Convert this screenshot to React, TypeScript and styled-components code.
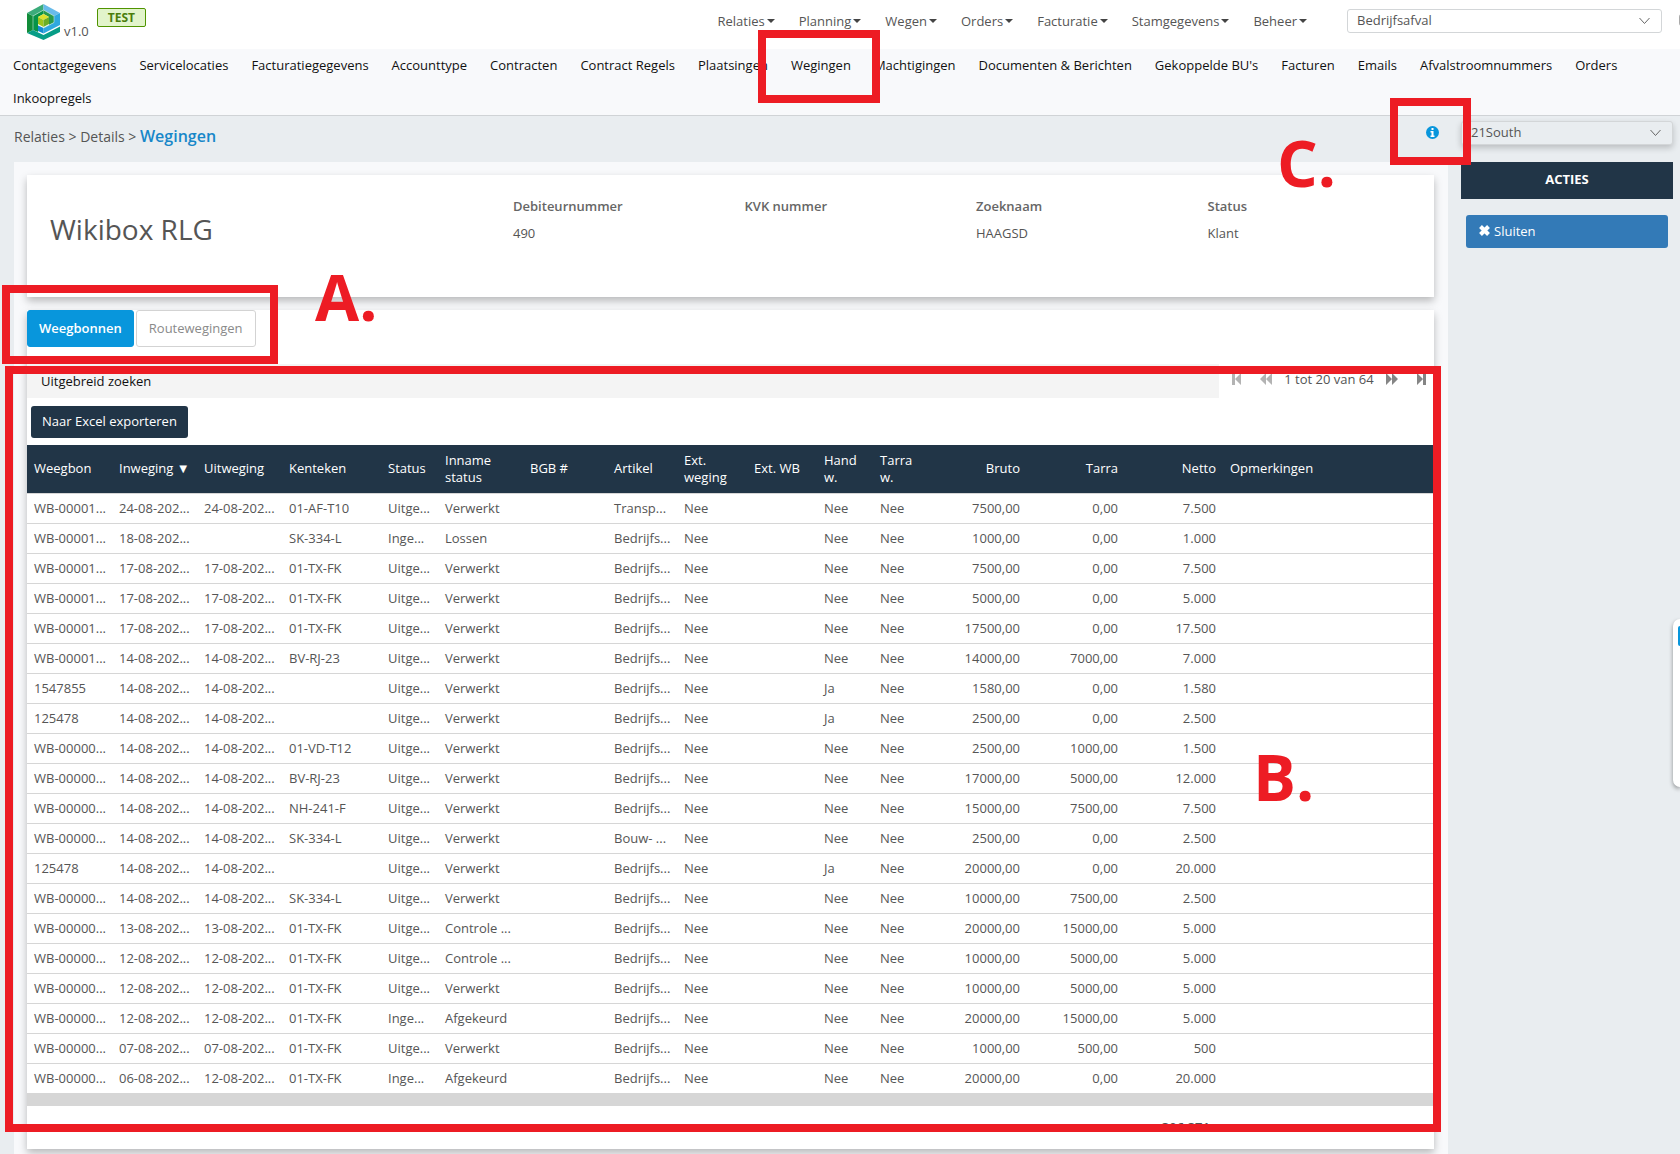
import React from "react";
import styled, { createGlobalStyle, css } from "styled-components";

const GlobalStyle = createGlobalStyle`
  *, *::before, *::after { box-sizing: border-box; }
  body {
    margin: 0;
    background: #e9edf0;
    color: #555;
    font-family: "Open Sans", "Noto Sans", sans-serif;
    font-size: 13px;
    line-height: 18px;
    overflow-x: hidden;
  }
  button, select { font: inherit; }
  a { color: inherit; text-decoration: none; }
`;

const RED = "#ed1c24";
const NAVY = "#213547";

const Page = styled.div`
  position: relative;
  display: flex;
  flex-direction: column;
  min-height: 100vh;
  overflow: hidden;
`;

const TopBar = styled.header`
  display: flex;
  align-items: flex-start;
  height: 49px;
  padding-left: 27px;
  background: #fff;
`;

const Logo = styled.svg`
  width: 33px;
  height: 36px;
  margin-top: 4px;
`;

const Version = styled.span`
  margin: 22px 8px 0 4px;
`;

const EnvBadge = styled.span`
  margin-top: 8px;
  padding: 0 10px;
  border: 1px solid #4f9400;
  border-radius: 2px;
  background: #e2f4cb;
  color: #4a7d0c;
  font-size: 12px;
  font-weight: 700;
  line-height: 17px;
`;

const MainNav = styled.nav`
  display: flex;
  gap: 24px;
  margin-left: auto;
  padding-top: 12px;
`;

const NavLink = styled.a`
  display: flex;
  align-items: center;
  gap: 2px;
  &::after {
    content: "";
    border: 4px solid transparent;
    border-top-color: #444;
    border-bottom: 0;
  }
`;

const SelectBox = styled.div<{ $raised?: boolean }>`
  position: relative;
  height: 24px;
  border: 1px solid #d3d6d8;
  border-radius: 3px;
  background: #fff;
  ${(p) =>
    p.$raised
      ? css`
          background: #e9edf0;
          box-shadow: 0 3px 6px rgba(0, 0, 0, 0.2);
        `
      : css`
          width: 315px;
          margin: 9px 17px 0 40px;
        `}
  select {
    display: block;
    width: 100%;
    height: 20px;
    padding: 0 9px;
    border: 0;
    background: transparent;
    color: #555;
    appearance: none;
  }
  svg {
    position: absolute;
    top: 7px;
    right: 11px;
    width: 11px;
    height: 8px;
    pointer-events: none;
  }
`;

const UserDot = styled.button`
  flex: none;
  width: 16px;
  height: 12px;
  margin: 14px -15px 0 0;
  padding: 0;
  border: 0;
  border-radius: 3px;
  background: #a9a9a9;
`;

const SubNav = styled.nav`
  display: flex;
  flex-wrap: wrap;
  column-gap: 23px;
  padding: 0 13px;
  border-bottom: 1px solid #d0d3d6;
  background: #f8f9fb;
  color: #111;
  line-height: 33px;
`;

const Body = styled.div`
  display: flex;
  flex: 1;
`;

const Main = styled.main`
  display: flex;
  flex: 1;
  flex-direction: column;
  min-width: 0;
  padding-left: 14px;
`;

const Crumbs = styled.div`
  display: flex;
  align-items: center;
  justify-content: space-between;
  height: 46px;
  padding-right: 9px;
  font-size: 14px;
`;

const CrumbPath = styled.div`
  padding-bottom: 6px;
  strong {
    color: #1787c9;
    font-size: 16px;
    font-weight: 600;
  }
`;

const InfoButton = styled.button`
  display: flex;
  padding: 0 0 13px;
  border: 0;
  background: none;
  svg {
    width: 13px;
    height: 13px;
  }
`;

const Content = styled.div`
  flex: 1;
  padding: 13px 14px 4px 13px;
  background: #f8f9fb;
`;

const Card = styled.section`
  margin-bottom: 13px;
  background: #fff;
  box-shadow: 0 4px 8px rgba(0, 0, 0, 0.26);
  &:last-child {
    margin-bottom: 0;
  }
`;

const Summary = styled(Card)`
  display: grid;
  grid-template-columns: 2fr 1fr 1fr 1fr 1fr;
  height: 122px;
  padding: 22px 9px 0;
`;

const Title = styled.h1`
  margin: 15px 0 0 14px;
  font-size: 28px;
  font-weight: 400;
  line-height: 34px;
`;

const Field = styled.dl`
  margin: 0 0 0 14px;
  dt {
    color: #666;
    font-weight: 600;
  }
  dd {
    margin: 9px 0 0;
  }
`;

const Tabs = styled.div`
  display: flex;
  gap: 2px;
  height: 54px;
`;

const Tab = styled.button<{ $active?: boolean }>`
  height: 37px;
  padding: 0 ${(p) => (p.$active ? 11 : 12)}px 2px;
  border: 1px solid ${(p) => (p.$active ? "#0896dc" : "#d3d3d3")};
  border-radius: 3px;
  background: ${(p) => (p.$active ? "#0896dc" : "#fff")};
  color: ${(p) => (p.$active ? "#fff" : "#8a8a8a")};
  font-weight: ${(p) => (p.$active ? 600 : 400)};
`;

const SearchRow = styled.div`
  display: flex;
  height: 34px;
`;

const SearchToggle = styled.button`
  flex: 1;
  padding: 0 14px;
  border: 0;
  background: #f4f4f4;
  color: #111;
  text-align: left;
`;

const Pager = styled.div`
  display: flex;
  align-items: center;
  justify-content: space-between;
  width: 215px;
  padding: 0 8px 4px 13px;
`;

const PagerCenter = styled.div`
  display: flex;
  align-items: center;
  gap: 12px;
`;

const PageButton = styled.button<{ $off?: boolean }>`
  display: flex;
  padding: 0;
  border: 0;
  background: none;
  color: ${(p) => (p.$off ? "#b3b3b3" : "#858585")};
  svg {
    height: 12px;
    fill: currentColor;
  }
`;

const Toolbar = styled.div`
  height: 47px;
  padding: 8px 4px;
`;

const ExportButton = styled.button`
  height: 32px;
  padding: 0 11px 2px;
  border: 0;
  border-radius: 3px;
  background: ${NAVY};
  color: #fff;
`;

const Grid = styled.table`
  width: 100%;
  border-collapse: separate;
  border-spacing: 0;
  table-layout: fixed;
`;

const Col = styled.col<{ $w?: number }>`
  width: ${(p) => (p.$w ? `${p.$w}px` : "auto")};
`;

const HeadCell = styled.th<{ $right?: boolean }>`
  height: 48px;
  padding: 0 7px 1px;
  background: ${NAVY};
  color: #fff;
  font-weight: 400;
  line-height: 17px;
  text-align: ${(p) => (p.$right ? "right" : "left")};
`;

const Cell = styled.td<{ $right?: boolean }>`
  height: 30px;
  padding: 0 0 1px 7px;
  padding-right: ${(p) => (p.$right ? 7 : 0)}px;
  overflow: hidden;
  border-top: 1px solid #d6d6d6;
  text-align: ${(p) => (p.$right ? "right" : "left")};
  white-space: nowrap;
`;

const FootBar = styled.td`
  height: 13px;
  padding: 0;
  background: #d6d6d6;
`;

const FootCell = styled.td`
  height: 43px;
  padding: 0 13px 2px 0;
  font-weight: 600;
  text-align: right;
`;

const Aside = styled.aside`
  width: 212px;
  margin: 5px 7px 0 13px;
`;

const AsideTitle = styled.h2`
  margin: 17px 0 16px;
  padding-bottom: 2px;
  background: ${NAVY};
  color: #fff;
  font-size: 13px;
  font-weight: 700;
  line-height: 35px;
  text-align: center;
`;

const CloseButton = styled.button`
  display: flex;
  align-items: center;
  gap: 3px;
  width: calc(100% - 10px);
  height: 33px;
  margin: 0 5px;
  padding: 0 12px 2px;
  border: 0;
  border-radius: 3px;
  background: #337ab7;
  color: #fff;
  svg {
    width: 13px;
    height: 13px;
  }
`;

const SideTab = styled.div`
  position: absolute;
  top: 619px;
  right: 0;
  width: 7px;
  height: 168px;
  padding: 7px 0 0 5px;
  border-radius: 7px 0 0 7px;
  background: #fff;
  box-shadow: 0 2px 4px rgba(0, 0, 0, 0.4);
  &::after {
    content: "";
    display: block;
    height: 20px;
    border-radius: 2px 0 0 2px;
    background: #0896dc;
  }
`;

const Marker = styled.div<{ $x: number; $y: number; $w: number; $h: number }>`
  position: absolute;
  left: ${(p) => p.$x}px;
  top: ${(p) => p.$y}px;
  width: ${(p) => p.$w}px;
  height: ${(p) => p.$h}px;
  border: 8px solid ${RED};
  pointer-events: none;
`;

const MarkerLabel = styled.span<{ $x: number; $y: number }>`
  position: absolute;
  left: ${(p) => p.$x}px;
  top: ${(p) => p.$y}px;
  color: ${RED};
  font-size: 64px;
  font-weight: 700;
  line-height: 64px;
  pointer-events: none;
`;

const mainLinks = ["Relaties", "Planning", "Wegen", "Orders", "Facturatie", "Stamgegevens", "Beheer"];

const subLinks = [
  "Contactgegevens", "Servicelocaties", "Facturatiegegevens", "Accounttype", "Contracten",
  "Contract Regels", "Plaatsingen", "Wegingen", "Machtigingen", "Documenten & Berichten",
  "Gekoppelde BU's", "Facturen", "Emails", "Afvalstroomnummers", "Orders", "Inkoopregels",
];

const fields = [
  ["Debiteurnummer", "490"],
  ["KVK nummer", ""],
  ["Zoeknaam", "HAAGSD"],
  ["Status", "Klant"],
];

const columns: { title: string; w?: number; right?: boolean }[] = [
  { title: "Weegbon", w: 85 },
  { title: "Inweging ▼", w: 85 },
  { title: "Uitweging", w: 85 },
  { title: "Kenteken", w: 99 },
  { title: "Status", w: 57 },
  { title: "Inname status", w: 85 },
  { title: "BGB #", w: 84 },
  { title: "Artikel", w: 70 },
  { title: "Ext. weging", w: 70 },
  { title: "Ext. WB", w: 70 },
  { title: "Hand w.", w: 56 },
  { title: "Tarra w.", w: 56 },
  { title: "Bruto", w: 98, right: true },
  { title: "Tarra", w: 98, right: true },
  { title: "Netto", w: 98, right: true },
  { title: "Opmerkingen" },
];

// bon | in | uit | kenteken | status | inname | artikel | hand | bruto | tarra | netto
const records = `WB-00001...|24-08-202...|24-08-202...|01-AF-T10|Uitge...|Verwerkt|Transp...|Nee|7500,00|0,00|7.500
WB-00001...|18-08-202...||SK-334-L|Inge...|Lossen|Bedrijfs...|Nee|1000,00|0,00|1.000
WB-00001...|17-08-202...|17-08-202...|01-TX-FK|Uitge...|Verwerkt|Bedrijfs...|Nee|7500,00|0,00|7.500
WB-00001...|17-08-202...|17-08-202...|01-TX-FK|Uitge...|Verwerkt|Bedrijfs...|Nee|5000,00|0,00|5.000
WB-00001...|17-08-202...|17-08-202...|01-TX-FK|Uitge...|Verwerkt|Bedrijfs...|Nee|17500,00|0,00|17.500
WB-00001...|14-08-202...|14-08-202...|BV-RJ-23|Uitge...|Verwerkt|Bedrijfs...|Nee|14000,00|7000,00|7.000
1547855|14-08-202...|14-08-202...||Uitge...|Verwerkt|Bedrijfs...|Ja|1580,00|0,00|1.580
125478|14-08-202...|14-08-202...||Uitge...|Verwerkt|Bedrijfs...|Ja|2500,00|0,00|2.500
WB-00000...|14-08-202...|14-08-202...|01-VD-T12|Uitge...|Verwerkt|Bedrijfs...|Nee|2500,00|1000,00|1.500
WB-00000...|14-08-202...|14-08-202...|BV-RJ-23|Uitge...|Verwerkt|Bedrijfs...|Nee|17000,00|5000,00|12.000
WB-00000...|14-08-202...|14-08-202...|NH-241-F|Uitge...|Verwerkt|Bedrijfs...|Nee|15000,00|7500,00|7.500
WB-00000...|14-08-202...|14-08-202...|SK-334-L|Uitge...|Verwerkt|Bouw- ...|Nee|2500,00|0,00|2.500
125478|14-08-202...|14-08-202...||Uitge...|Verwerkt|Bedrijfs...|Ja|20000,00|0,00|20.000
WB-00000...|14-08-202...|14-08-202...|SK-334-L|Uitge...|Verwerkt|Bedrijfs...|Nee|10000,00|7500,00|2.500
WB-00000...|13-08-202...|13-08-202...|01-TX-FK|Uitge...|Controle ...|Bedrijfs...|Nee|20000,00|15000,00|5.000
WB-00000...|12-08-202...|12-08-202...|01-TX-FK|Uitge...|Controle ...|Bedrijfs...|Nee|10000,00|5000,00|5.000
WB-00000...|12-08-202...|12-08-202...|01-TX-FK|Uitge...|Verwerkt|Bedrijfs...|Nee|10000,00|5000,00|5.000
WB-00000...|12-08-202...|12-08-202...|01-TX-FK|Inge...|Afgekeurd|Bedrijfs...|Nee|20000,00|15000,00|5.000
WB-00000...|07-08-202...|07-08-202...|01-TX-FK|Uitge...|Verwerkt|Bedrijfs...|Nee|1000,00|500,00|500
WB-00000...|06-08-202...|12-08-202...|01-TX-FK|Inge...|Afgekeurd|Bedrijfs...|Nee|20000,00|0,00|20.000`
  .split("\n")
  .map((line) => {
    const [bon, inw, uit, plate, status, inname, artikel, hand, bruto, tarra, netto] = line.split("|");
    return [bon, inw, uit, plate, status, inname, "", artikel, "Nee", "", hand, "Nee", bruto, tarra, netto, ""];
  });

const Chevron = () => (
  <svg viewBox="0 0 11 8" fill="none" stroke="#666" aria-hidden="true">
    <path d="M0.5 1L5.5 6.5L10.5 1" />
  </svg>
);

const BrandLogo = () => (
  <Logo viewBox="0 0 33 36" role="img" aria-label="Logo">
    <path d="M0 9L6 12V26L0 29Z" fill="#128c39" />
    <path d="M0 9L16.5 0V6L6 12Z" fill="#3bab7a" />
    <path d="M16.5 0L33 9L27 12L16.5 6Z" fill="#68bbea" />
    <path d="M6 12L16.5 6V10L11 13V28L6 26Z" fill="#079348" />
    <path d="M16.5 6L27 12V18.5L22 21V13L16.5 10Z" fill="#2a9a4a" />
    <path d="M33 9V21L16.5 29.5V24L27 18.5V12Z" fill="#2fa8df" />
    <path d="M11 21.5L16.5 24V29.5L11 27Z" fill="#138bd2" />
    <path d="M0 29L6 26L16.5 31L33 22.5V28L16.5 36Z" fill="#079d87" />
    <path d="M11 13L16.5 10L22 13L16.5 16Z" fill="#dce22c" />
    <path d="M11 13L16.5 16V23L11 20Z" fill="#9fc51c" />
    <path d="M22 13L16.5 16V23L22 20Z" fill="#6cae25" />
    <path d="M6 26V12L16.5 6L27 12V18.5L16.5 24" fill="none" stroke="#c5e8da" strokeWidth="0.6" />
  </Logo>
);

const StepIcon = ({ flip }: { flip?: boolean }) => (
  <svg width="9" viewBox="0 0 9 12" aria-hidden="true">
    <path d={flip ? "M0 0L6 6L0 12ZM6 0H9V12H6Z" : "M9 0L3 6L9 12ZM0 0H3V12H0Z"} />
  </svg>
);

const SkipIcon = ({ flip }: { flip?: boolean }) => (
  <svg width="12" viewBox="0 0 12 12" aria-hidden="true">
    <path d={flip ? "M0 0L6 6L0 12ZM6 0L12 6L6 12Z" : "M6 0L0 6L6 12ZM12 0L6 6L12 12Z"} />
  </svg>
);

export default function App() {
  return (
    <Page>
      <GlobalStyle />
      <TopBar>
        <BrandLogo />
        <Version>v1.0</Version>
        <EnvBadge>TEST</EnvBadge>
        <MainNav>
          {mainLinks.map((name) => (
            <NavLink href="#" key={name}>{name}</NavLink>
          ))}
        </MainNav>
        <SelectBox>
          <select aria-label="Afvalsoort">
            <option>Bedrijfsafval</option>
          </select>
          <Chevron />
        </SelectBox>
        <UserDot aria-label="Gebruiker" />
      </TopBar>
      <SubNav>
        {subLinks.map((name) => (
          <a href="#" key={name}>{name}</a>
        ))}
      </SubNav>
      <Body>
        <Main>
          <Crumbs>
            <CrumbPath>
              <a href="#">Relaties</a> &gt; <a href="#">Details</a> &gt; <strong>Wegingen</strong>
            </CrumbPath>
            <InfoButton aria-label="Informatie">
              <svg viewBox="0 0 13 13" aria-hidden="true">
                <circle cx="6.5" cy="6.5" r="6.5" fill="#0896dc" />
                <path d="M5.500 2H7.500V4H5.500ZM4.500 5H7.500V9.500H8.500V11H4.500V9.500H5.500V6.500H4.500Z" fill="#fff" />
              </svg>
            </InfoButton>
          </Crumbs>
          <Content>
            <Summary>
              <Title>Wikibox RLG</Title>
              {fields.map(([label, value]) => (
                <Field key={label}>
                  <dt>{label}</dt>
                  <dd>{value}</dd>
                </Field>
              ))}
            </Summary>
            <Card>
              <Tabs>
                <Tab $active>Weegbonnen</Tab>
                <Tab>Routewegingen</Tab>
              </Tabs>
              <SearchRow>
                <SearchToggle>Uitgebreid zoeken</SearchToggle>
                <Pager>
                  <PageButton $off aria-label="Eerste pagina"><StepIcon /></PageButton>
                  <PagerCenter>
                    <PageButton $off aria-label="Vorige pagina"><SkipIcon /></PageButton>
                    <span>1 tot 20 van 64</span>
                    <PageButton aria-label="Volgende pagina"><SkipIcon flip /></PageButton>
                  </PagerCenter>
                  <PageButton aria-label="Laatste pagina"><StepIcon flip /></PageButton>
                </Pager>
              </SearchRow>
              <Toolbar>
                <ExportButton>Naar Excel exporteren</ExportButton>
              </Toolbar>
              <Grid>
                <colgroup>
                  {columns.map((c, i) => (
                    <Col key={i} $w={c.w} />
                  ))}
                </colgroup>
                <thead>
                  <tr>
                    {columns.map((c, i) => (
                      <HeadCell key={i} scope="col" $right={c.right}>{c.title}</HeadCell>
                    ))}
                  </tr>
                </thead>
                <tbody>
                  {records.map((row, r) => (
                    <tr key={r}>
                      {row.map((value, i) => (
                        <Cell key={i} $right={columns[i].right}>{value}</Cell>
                      ))}
                    </tr>
                  ))}
                </tbody>
                <tfoot>
                  <tr><FootBar colSpan={16} /></tr>
                  <tr>
                    <FootCell colSpan={15}>306.371</FootCell>
                    <td />
                  </tr>
                </tfoot>
              </Grid>
            </Card>
          </Content>
        </Main>
        <Aside>
          <SelectBox $raised>
            <select aria-label="Vestiging">
              <option>21South</option>
            </select>
            <Chevron />
          </SelectBox>
          <AsideTitle>ACTIES</AsideTitle>
          <CloseButton>
            <svg viewBox="0 0 13 13" aria-hidden="true">
              <path d="M2.500 2.500L10.500 10.500M10.500 2.500L2.500 10.500" stroke="#fff" strokeWidth="4" />
            </svg>
            Sluiten
          </CloseButton>
        </Aside>
      </Body>
      <SideTab />
      <Marker $x={758} $y={30} $w={122} $h={73} />
      <Marker $x={1390} $y={98} $w={81} $h={67} />
      <Marker $x={2} $y={285} $w={276} $h={79} />
      <Marker $x={5} $y={366} $w={1436} $h={766} />
      <MarkerLabel $x={315} $y={265}>A.</MarkerLabel>
      <MarkerLabel $x={1253} $y={745}>B.</MarkerLabel>
      <MarkerLabel $x={1277} $y={131}>C.</MarkerLabel>
    </Page>
  );
}
